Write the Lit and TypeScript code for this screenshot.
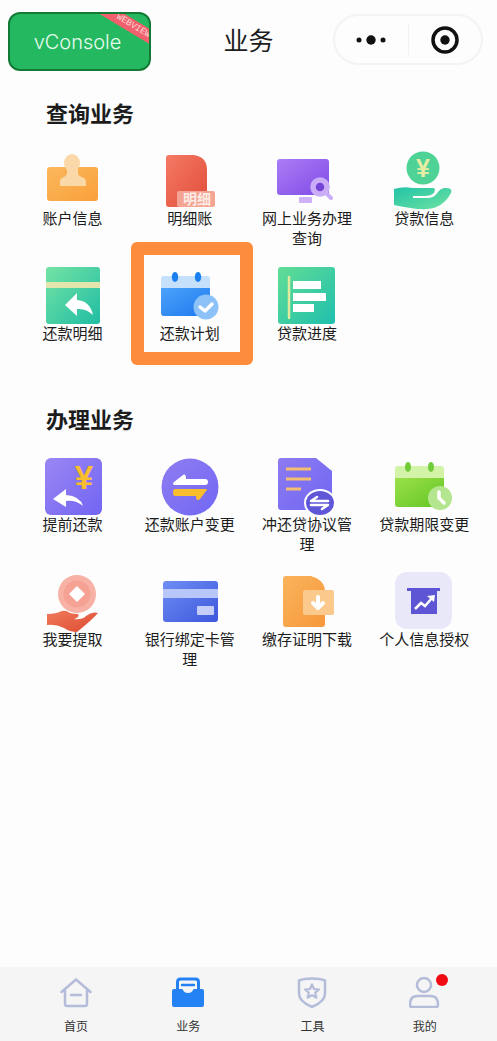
import { LitElement, html, css, svg, nothing } from "lit";
import { customElement, property, state } from "lit/decorators.js";

type Art = ReturnType<typeof svg>;

interface Service {
  label: string;
  art: Art;
  marked?: boolean;
}

const gradient = (id: string, from: string, to: string) => svg`
  <linearGradient id=${id} x1="0" y1="0" x2="1" y2="1">
    <stop offset="0" stop-color=${from}></stop>
    <stop offset="1" stop-color=${to}></stop>
  </linearGradient>`;

const account = svg`
  ${gradient("g", "#fbb75c", "#f9a03a")}
  <rect x="4" y="16" width="51" height="34" rx="3" fill="url(#g)"></rect>
  <ellipse cx="29" cy="12" rx="8" ry="9" fill="#fbd8a8"></ellipse>
  <path d="M24 16v6c0 5-7 3-7 9v4h26v-4c0-6-8-4-8-9v-6z" fill="#fbd8a8"></path>`;

const ledger = svg`
  ${gradient("g", "#f57a64", "#e04d3a")}
  <path d="M9 4h25q13 2 13 15v37H9q-3 0-3-3V7q0-3 3-3z" fill="url(#g)"></path>
  <rect x="17" y="40" width="38" height="16" rx="2" fill="#f4a493"></rect>
  <text class="tag" x="37" y="53" text-anchor="middle">明细</text>`;

const online = svg`
  ${gradient("g", "#ab7df5", "#7f4be6")}
  <rect x="0" y="8" width="52" height="36" rx="3" fill="url(#g)"></rect>
  <rect x="22" y="46" width="13" height="6" rx="1" fill="#cdb2f8"></rect>
  <path d="M49 42l5 5" stroke="#c9aef7" stroke-width="4" stroke-linecap="round"></path>
  <circle cx="43" cy="36" r="7" fill="#7443d8" stroke="#c9aef7" stroke-width="5.5"></circle>`;

const loan = svg`
  ${gradient("g", "#22c3a8", "#6fe3a0")}
  <circle cx="29" cy="17" r="16.5" fill="#4fd296"></circle>
  <text class="yen pale" x="29" y="26" text-anchor="middle">¥</text>
  <path d="M0 38q10-3 18-1h21q2 0 2 2-1 6-10 6H19v2h14c12 0 9-10 19-10q7 0 5 5-8 15-24 16Q22 59 0 54z" fill="url(#g)"></path>
  <path d="M20 46h12c8 0 10-4 12-8" fill="none" stroke="#fdfdfd" stroke-width="2" stroke-linecap="round"></path>`;

const repayDetail = svg`
  ${gradient("g", "#74e3a4", "#20bda4")}
  <rect x="3" y="1" width="54" height="57" rx="3" fill="url(#g)"></rect>
  <rect x="3" y="16" width="54" height="6" fill="#e3e6ac"></rect>
  <path d="M22 39L34 27v7q13 1 16 15-7-7-16-6v7z" fill="#fff"></path>`;

const repayPlan = svg`
  ${gradient("g", "#4aa3fa", "#1f78ee")}
  <path d="M4 10h43q3 0 3 3v10H1V13q0-3 3-3z" fill="#c5e0fb"></path>
  <path d="M1 22h49v25q0 3-3 3H4q-3 0-3-3z" fill="url(#g)"></path>
  <ellipse cx="15" cy="11" rx="3.2" ry="5" fill="#1c7ff0"></ellipse>
  <ellipse cx="38" cy="11" rx="3.2" ry="5" fill="#1c7ff0"></ellipse>
  <circle cx="46" cy="41" r="12.5" fill="#8cc2f8"></circle>
  <path d="M40 41l5 4 7-7" fill="none" stroke="#fff" stroke-width="3.5" stroke-linecap="round" stroke-linejoin="round"></path>`;

const progress = svg`
  ${gradient("g", "#62dd95", "#1fbfae")}
  <rect x="1" y="1" width="57" height="57" rx="3" fill="url(#g)"></rect>
  <path d="M12 11v41" stroke="#e0e99c" stroke-width="2.5" stroke-linecap="round"></path>
  <path d="M16 15h28v8H16zM16 27h33v8H16zM16 38h21v8H16z" fill="#fff"></path>`;

const prepay = svg`
  ${gradient("g", "#9a86f4", "#7165f2")}
  <rect x="2" y="1" width="57" height="57" rx="6" fill="url(#g)"></rect>
  <text class="yen large" x="41" y="32" text-anchor="middle">¥</text>
  <path d="M10 42L23 32v6q14 1 17 11-7-6-17-5v6z" fill="#fff"></path>`;

const switchAccount = svg`
  ${gradient("g", "#8f7df0", "#7167f5")}
  <circle cx="30" cy="30" r="28.5" fill="url(#g)"></circle>
  <path d="M14 28q-2-1 0-3l9-7q3-2 3 4h19q3 0 3 3t-3 3z" fill="#fff"></path>
  <path d="M46 32q2 1 0 2l-6 8q-4 3-4-3H15q-2 0-2-3.500t2-3.500z" fill="#fabd2d"></path>`;

const agreement = svg`
  ${gradient("g", "#8d7bf0", "#6f66f3")}
  <path d="M4 1h35l16 13v36q0 3-3 3H4q-3 0-3-3V4q0-3 3-3z" fill="url(#g)"></path>
  <path d="M9 12h25M9 22h25M9 32h15" stroke="#f3bd72" stroke-width="3"></path>
  <ellipse cx="43" cy="46" rx="16" ry="14" fill="#fff"></ellipse>
  <ellipse cx="43" cy="46" rx="14" ry="12" fill="#5f57d8"></ellipse>
  <path d="M51 44H34l6-4M34 48h17l-6 4" fill="none" stroke="#fff" stroke-width="2.5" stroke-linecap="round" stroke-linejoin="round"></path>`;

const term = svg`
  ${gradient("g", "#9be04a", "#61c623")}
  <path d="M4 9h43q3 0 3 3v10H1V12q0-3 3-3z" fill="#d2f3a8"></path>
  <path d="M1 21h49v26q0 3-3 3H4q-3 0-3-3z" fill="url(#g)"></path>
  <ellipse cx="14" cy="10" rx="3" ry="5" fill="#72cb3a"></ellipse>
  <ellipse cx="37" cy="10" rx="3" ry="5" fill="#72cb3a"></ellipse>
  <circle cx="46" cy="41" r="12" fill="#b4e58f"></circle>
  <path d="M45 35v6l5 5" fill="none" stroke="#fff" stroke-width="3.5" stroke-linecap="round"></path>`;

const withdraw = svg`
  ${gradient("g", "#f07a5c", "#dd4a30")}
  <circle cx="34" cy="22" r="19" fill="#f8b2a5"></circle>
  <circle cx="34" cy="22" r="13.500" fill="#f5a194"></circle>
  <path d="M34 14l8 8-8 8-8-8z" fill="#fff"></path>
  <path d="M4 42q9 0 15-3 4-1 8 2 4 1 8 1 2 3-4 5 8 1 12-3 6-5 12-3-6 7-21 19-7 0-13-4-8-4-17-3z" fill="url(#g)"></path>`;

const bankCard = svg`
  ${gradient("g", "#6f8df3", "#3d57dc")}
  <rect x="3" y="9" width="55" height="41" rx="3" fill="url(#g)"></rect>
  <rect x="3" y="17" width="55" height="9" fill="#b9c6f9"></rect>
  <rect x="37" y="34" width="17" height="9" rx="1" fill="#c5cefa"></rect>`;

const certificate = svg`
  ${gradient("g", "#fbb45c", "#f6973a")}
  <path d="M9 4h25q14 4 14 16v32q0 3-3 3H9q-3 0-3-3V7q0-3 3-3z" fill="url(#g)"></path>
  <rect x="26" y="18" width="31" height="25" rx="2" fill="#fcc98c"></rect>
  <path d="M41 25v10m-5-4l5 5 5-5" fill="none" stroke="#fff" stroke-width="4" stroke-linecap="round" stroke-linejoin="round"></path>`;

const authorize = svg`
  <rect x="1" y="0" width="57" height="57" rx="12" fill="#e8e8f8"></rect>
  <path d="M13 16h33v3h-3v23H17V19h-4z" fill="#5d55d3"></path>
  <path d="M21 37l6-6 4 3 7-8" fill="none" stroke="#fff" stroke-width="2.500"></path>
  <path d="M33 24l8-1-1 7z" fill="#fff"></path>`;

const querying: Service[] = [
  { label: "账户信息", art: account },
  { label: "明细账", art: ledger },
  { label: "网上业务办理查询", art: online },
  { label: "贷款信息", art: loan },
  { label: "还款明细", art: repayDetail },
  { label: "还款计划", art: repayPlan, marked: true },
  { label: "贷款进度", art: progress },
];

const handling: Service[] = [
  { label: "提前还款", art: prepay },
  { label: "还款账户变更", art: switchAccount },
  { label: "冲还贷协议管理", art: agreement },
  { label: "贷款期限变更", art: term },
  { label: "我要提取", art: withdraw },
  { label: "银行绑定卡管理", art: bankCard },
  { label: "缴存证明下载", art: certificate },
  { label: "个人信息授权", art: authorize },
];

@customElement("service-tile")
class ServiceTile extends LitElement {
  @property({ attribute: false }) service!: Service;

  static styles = css`
    :host { display: block; }
    .tile {
      position: relative;
      display: flex;
      flex-direction: column;
      align-items: center;
      width: 100%;
      padding: 0 10px;
      border: 0;
      background: none;
      font: inherit;
      font-size: 15px;
      line-height: 20px;
      color: #1c1c1c;
      cursor: pointer;
    }
    .icon { display: block; width: 60px; height: 58px; margin-bottom: -1px; overflow: visible; }
    /* Guide frame laid over the entry the user is being led to. */
    .marked::after {
      content: "";
      position: absolute;
      inset: -24px -4px -22px 0;
      border: 13px solid #fd8d3c;
      border-radius: 6px;
      pointer-events: none;
    }
    .tag { font-size: 14px; font-weight: 700; fill: #fdeae5; }
    .yen { font-family: "Liberation Sans", sans-serif; font-weight: 700; font-size: 25px; }
    .pale { fill: #e6eda4; }
    .large { font-size: 33px; fill: #fabd2d; }
  `;

  render() {
    const { label, art, marked } = this.service;
    return html`
      <button class="tile ${marked ? "marked" : ""}" type="button">
        <svg class="icon" viewBox="0 0 60 58" aria-hidden="true">${art}</svg>
        <span>${label}</span>
      </button>`;
  }
}

interface Tab {
  id: string;
  label: string;
  art: Art;
  dot?: boolean;
}

const tabPairs: Tab[][] = [
  [
    {
      id: "home",
      label: "首页",
      art: svg`
        <path d="M1.500 16L16 3.500 30.500 16M5 14v14q0 2 2 2h18q2 0 2-2V14M11 19h10" fill="none" stroke="#b4bcd9" stroke-width="2.500" stroke-linecap="round" stroke-linejoin="round"></path>`,
    },
    {
      id: "business",
      label: "业务",
      art: svg`
        <path d="M5.500 15V6q0-3 3-3h15q3 0 3 3v9" fill="none" stroke="#2482f5" stroke-width="3"></path>
        <path d="M10 9h12" stroke="#2482f5" stroke-width="2.500" stroke-linecap="round"></path>
        <path d="M2 13h8q1 0 1.500 2 1 2 4.500 2t4.500-2q.5-2 1.500-2h8q2 0 2 2v14q0 2-2 2H2q-2 0-2-2V15q0-2 2-2z" fill="#2482f5"></path>`,
    },
  ],
  [
    {
      id: "tools",
      label: "工具",
      art: svg`
        <path d="M15 2.500q8 0 13 2v13q0 8-13 13.500-13-5.500-13-13.500v-13q5-2 13-2z" fill="none" stroke="#b4bcd9" stroke-width="2.500" stroke-linejoin="round"></path>
        <path d="M15 8.500l2 4.500 5 .5-3.800 3.200 1.200 5-4.400-2.600-4.400 2.600 1.200-5L8 13.500l5-.5z" fill="none" stroke="#b4bcd9" stroke-width="2.200" stroke-linejoin="round"></path>`,
    },
    {
      id: "mine",
      label: "我的",
      dot: true,
      art: svg`
        <circle cx="15" cy="9" r="7" fill="none" stroke="#b4bcd9" stroke-width="2.500"></circle>
        <path d="M8 20h14q7 0 7 9 0 2-2 2H3q-2 0-2-2 0-9 7-9z" fill="none" stroke="#b4bcd9" stroke-width="2.500"></path>`,
    },
  ],
];

@customElement("app-root")
class AppRoot extends LitElement {
  @state() private current = "business";

  static styles = css`
    :host {
      display: flex;
      flex-direction: column;
      min-height: 100vh;
      background: #fdfdfd;
      color: #1c1c1c;
      font-family: "Noto Sans CJK SC", sans-serif;
    }
    .header {
      display: grid;
      grid-template-columns: 1fr auto 1fr;
      align-items: start;
      padding: 12px 8px;
    }
    .console {
      position: relative;
      overflow: hidden;
      justify-self: start;
      width: 143px;
      height: 59px;
      padding: 0 4px 0 0;
      border: 2px solid #137a35;
      border-radius: 12px;
      background: #24b960;
      color: #e6fbee;
      font-family: Inter, sans-serif;
      font-size: 20px;
      font-weight: 300;
    }
    .ribbon {
      position: absolute;
      top: 6px;
      right: -24px;
      width: 80px;
      background: #f0616d;
      color: #fbdcdc;
      font-family: "Liberation Mono", monospace;
      font-size: 9px;
      line-height: 13px;
      text-align: center;
      transform: rotate(31deg);
    }
    .title { margin: 0; font-size: 25px; line-height: 54px; font-weight: 400; }
    .capsule {
      display: flex;
      justify-self: end;
      width: 150px;
      height: 51px;
      box-sizing: border-box;
      margin: 2px 6px 0 0;
      padding: 8px 0;
      border: 2px solid #f3f3f3;
      border-radius: 26px;
    }
    .capsule-button {
      flex: 1;
      display: grid;
      place-items: center;
      padding: 0;
      border: 0;
      background: none;
    }
    .capsule-button + .capsule-button { border-left: 1px solid #f1f1f1; }
    .capsule-icon { display: block; width: 30px; height: 30px; }
    .main {
      flex: 1;
      display: flex;
      flex-direction: column;
      gap: 60px;
      padding: 14px 14px;
    }
    .heading { margin: 0 0 24px; padding-left: 32px; font-size: 22px; line-height: 30px; font-weight: 700; }
    .grid { display: grid; grid-template-columns: repeat(4, 1fr); row-gap: 18px; }
    .tabs { display: flex; gap: 12px; padding: 9px 16px 7px 20px; background: #f5f5f5; }
    .pair { flex: 1; display: flex; }
    .tab {
      flex: 1;
      display: flex;
      flex-direction: column;
      align-items: center;
      gap: 10px;
      padding: 0;
      border: 0;
      background: none;
      color: #333;
      font: inherit;
      font-size: 12px;
      line-height: 16px;
    }
    .tab-icon { position: relative; display: block; }
    .tab-art { display: block; width: 32px; height: 32px; }
    .dot {
      position: absolute;
      top: -2px;
      right: -7px;
      width: 12px;
      height: 12px;
      border-radius: 50%;
      background: #f00b12;
    }
  `;

  private section(title: string, services: Service[]) {
    return html`
      <section>
        <h2 class="heading">${title}</h2>
        <div class="grid">
          ${services.map((s) => html`<service-tile .service=${s}></service-tile>`)}
        </div>
      </section>`;
  }

  private tab(t: Tab) {
    return html`
      <button
        class="tab"
        type="button"
        aria-current=${this.current === t.id ? "page" : "false"}
        @click=${() => (this.current = t.id)}
      >
        <span class="tab-icon">
          <svg class="tab-art" viewBox="0 0 32 32" aria-hidden="true">${t.art}</svg>
          ${t.dot ? html`<span class="dot"></span>` : nothing}
        </span>
        <span>${t.label}</span>
      </button>`;
  }

  render() {
    return html`
      <header class="header">
        <button class="console" type="button">vConsole<span class="ribbon">WEBVIEW</span></button>
        <h1 class="title">业务</h1>
        <div class="capsule">
          <button class="capsule-button" type="button" aria-label="更多">
            <svg class="capsule-icon" viewBox="0 0 30 30" fill="#111">
              <circle cx="3" cy="15" r="2.500"></circle>
              <circle cx="15" cy="15" r="4.700"></circle>
              <circle cx="27" cy="15" r="2.500"></circle>
            </svg>
          </button>
          <button class="capsule-button" type="button" aria-label="关闭">
            <svg class="capsule-icon" viewBox="0 0 30 30">
              <circle cx="15" cy="15" r="12" fill="none" stroke="#111" stroke-width="3.500"></circle>
              <circle cx="15" cy="15" r="4.700" fill="#111"></circle>
            </svg>
          </button>
        </div>
      </header>
      <main class="main">
        ${this.section("查询业务", querying)} ${this.section("办理业务", handling)}
      </main>
      <nav class="tabs">
        ${tabPairs.map((pair) => html`<div class="pair">${pair.map((t) => this.tab(t))}</div>`)}
      </nav>`;
  }
}
